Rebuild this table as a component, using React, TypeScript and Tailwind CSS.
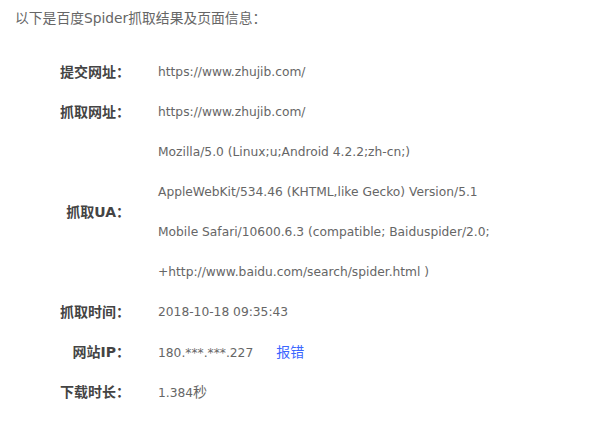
import React from "react";

const font = { fontFamily: '"DejaVu Sans", "Noto Sans CJK SC", sans-serif' };
const cjk = { fontFamily: '"Noto Sans CJK SC", sans-serif', fontSize: 14 };

function Row({ label, children }: { label: string; children: React.ReactNode }) {
  return (
    <div className="flex items-center min-h-[40px]">
      <div className="w-[130px] shrink-0 text-right font-bold text-[#444] text-[14px]">{label}</div>
      <div className="pl-[28px] text-[#666] text-[12.25px]">{children}</div>
    </div>
  );
}

export default function App() {
  return (
    <div className="w-[615px] h-[425px] bg-white" style={font}>
      <div className="h-[36px] pl-[15px] flex items-center text-[13.8px] text-[#666]">以下是百度Spider抓取结果及页面信息：</div>
      <div className="mt-[16px] flex flex-col">
        <Row label="提交网址：">https://www.zhujib.com/</Row>
        <Row label="抓取网址：">https://www.zhujib.com/</Row>
        <Row label="抓取UA：">
          <div className="leading-[40px]">Mozilla/5.0 (Linux;u;Android 4.2.2;zh-cn;)</div>
          <div className="leading-[40px]">AppleWebKit/534.46 (KHTML,like Gecko) Version/5.1</div>
          <div className="leading-[40px]">Mobile Safari/10600.6.3 (compatible; Baiduspider/2.0;</div>
          <div className="leading-[40px]">+http://www.baidu.com/search/spider.html )</div>
        </Row>
        <Row label="抓取时间：">2018-10-18 09:35:43</Row>
        <Row label="网站IP：">
          180.***.***.227<span className="ml-[23px] text-[#3b66ff]" style={cjk}>报错</span>
        </Row>
        <Row label="下载时长：">1.384<span style={cjk}>秒</span></Row>
      </div>
    </div>
  );
}
